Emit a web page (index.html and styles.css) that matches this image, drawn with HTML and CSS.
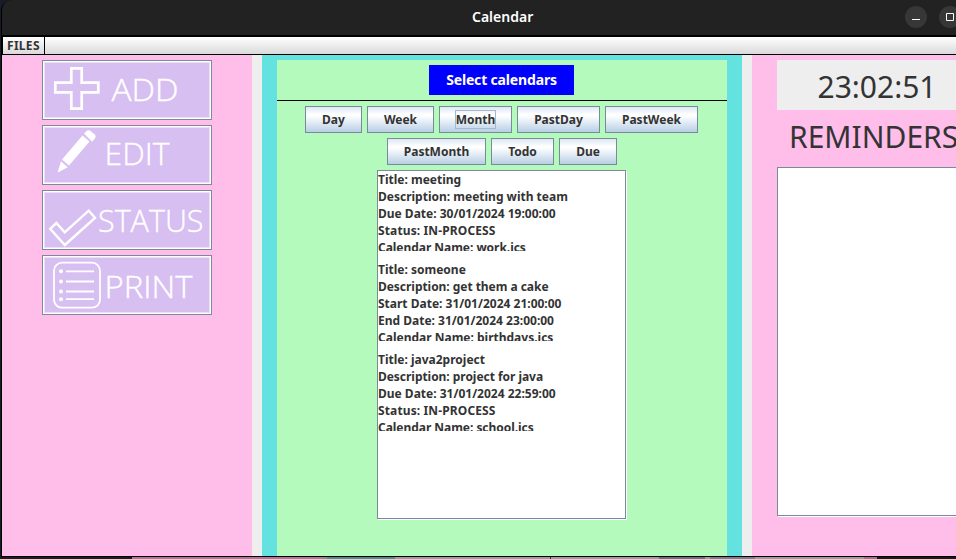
FILE: index.html
```html
<!DOCTYPE html>
<html lang="en">
<head>
<meta charset="utf-8">
<title>Calendar</title>
<link rel="stylesheet" href="styles.css">
</head>
<body>
<div class="window">
  <header class="titlebar">
    <h1 class="title">Calendar</h1>
    <div class="controls">
      <span class="control"><svg width="22" height="22" viewBox="0 0 22 22"><path d="M7 13.5h8" stroke="#fff"/></svg></span>
      <span class="control"><svg width="22" height="22" viewBox="0 0 22 22"><path d="M7.5 7.5h7v7h-7z" stroke="#fff" fill="none"/></svg></span>
    </div>
  </header>
  <nav class="menubar"><span class="menu">FILES</span></nav>
  <main class="content">
    <aside class="actions">
      <button class="action">
        <svg width="166" height="56" viewBox="0 0 166 56"><path d="M27.3 6.3h10.4v14.4h16.6v9.6h-16.6v16.4h-10.4v-16.4h-16v-9.6h16z" fill="none" stroke="#fff" stroke-width="2.7"/><text x="67.5" y="39" textLength="67" lengthAdjust="spacingAndGlyphs">ADD</text></svg>
      </button>
      <button class="action">
        <svg width="166" height="56" viewBox="0 0 166 56"><g fill="#fff"><path d="M38.5 8.5 45.5 14.5 25 38.5 18 32.5z"/><path d="M40 6.5 42.5 4q2-1.5 4 0l4 3.2q2 2 .3 4.3l-2.7 3.2z"/><path d="M17 34.2 23.7 40.2 14.3 45.3 13.8 44.7z"/></g><text x="60.5" y="37.5" textLength="65" lengthAdjust="spacingAndGlyphs">EDIT</text></svg>
      </button>
      <button class="action">
        <svg width="166" height="56" viewBox="0 0 166 56"><path d="M6.2 36.8 12.4 31 20.7 40.4 44.7 18.6 51 25.8 20.8 53z" fill="none" stroke="#fff" stroke-width="2.4"/><text x="54" y="39.5" textLength="105.5" lengthAdjust="spacingAndGlyphs">STATUS</text></svg>
      </button>
      <button class="action">
        <svg width="166" height="56" viewBox="0 0 166 56"><g fill="none" stroke="#fff"><rect x="10" y="5.7" width="46" height="45" rx="8" stroke-width="1.8"/><path d="M22 14.3h28M22 24.5h28M22 34.5h28M22 42.2h28" stroke-width="1.8"/></g><g fill="#fff"><circle cx="17" cy="14.3" r="2"/><circle cx="17" cy="24.5" r="2"/><circle cx="17" cy="34.5" r="2"/><circle cx="17" cy="42.2" r="2"/></g><text x="60.5" y="41" textLength="88" lengthAdjust="spacingAndGlyphs">PRINT</text></svg>
      </button>
    </aside>
    <section class="calendar">
      <div class="panel">
        <div class="picker"><button class="select">Select calendars</button></div>
        <div class="filters">
          <div class="row">
            <button class="filter w57">Day</button><button class="filter w67">Week</button><button class="filter w73"><span class="focus">Month</span></button><button class="filter w83">PastDay</button><button class="filter w93">PastWeek</button>
          </div>
          <div class="row">
            <button class="filter w99">PastMonth</button><button class="filter w63">Todo</button><button class="filter w58">Due</button>
          </div>
        </div>
        <div class="events">
          <div class="event"><p>Title: meeting</p><p>Description: meeting with team</p><p>Due Date: 30/01/2024 19:00:00</p><p class="status">Status: IN-PROCESS</p><p class="tight">Calendar Name: work.ics</p></div>
          <div class="event"><p>Title: someone</p><p class="tight">Description: get them a cake</p><p>Start Date: 31/01/2024 21:00:00</p><p>End Date: 31/01/2024 23:00:00</p><p>Calendar Name: birthdays.ics</p></div>
          <div class="event"><p>Title: java2project</p><p class="tight">Description: project for java</p><p>Due Date: 31/01/2024 22:59:00</p><p class="status">Status: IN-PROCESS</p><p class="tight">Calendar Name: school.ics</p></div>
        </div>
      </div>
    </section>
    <aside class="side">
      <div class="clock">23:02:51</div>
      <h2 class="heading">REMINDERS</h2>
      <div class="reminders"></div>
    </aside>
  </main>
</div>
<div class="desktop"></div>
</body>
</html>
```
FILE: styles.css
```css
* { box-sizing: border-box; margin: 0; padding: 0; }
html, body { width: 956px; height: 559px; overflow: hidden; }
body { background: #181c26; font: bold 12px "Noto Sans", sans-serif; color: #333; }
button { font: inherit; color: inherit; border: 0; display: block; white-space: nowrap; }
.window { height: 557px; margin-left: 1px; border-left: 1px solid #000; border-bottom: 1px solid #000; border-top-left-radius: 11px; overflow: hidden; }
.titlebar { height: 37px; background: #222; border-bottom: 2px solid #000; display: flex; justify-content: space-between; }
.title { font-size: 14px; line-height: 34px; color: #fff; font-weight: 600; padding-left: 470px; }
.controls { display: flex; gap: 12px; padding-top: 6px; width: 51px; flex: none; }
.control { width: 22px; height: 22px; border-radius: 50%; background: #373737; flex: none; }
.control svg { display: block; }
.menubar { height: 18px; border-left: 1px solid #000; border-bottom: 1px solid #000; background: linear-gradient(#fff, #dadada); display: flex; }
.menu { width: 42px; border-right: 1px solid #000; line-height: 17px; padding-left: 4px; letter-spacing: 0.3px; }
.content { height: 501px; display: flex; gap: 10px; background: #eee; }
.actions { width: 250px; flex: none; background: #ffbdea; padding-top: 5px; display: flex; flex-direction: column; align-items: center; gap: 5px; }
.action { width: 170px; height: 60px; border: 1px solid #7a8a99; background: #d8bff1; padding: 1px; box-shadow: inset 0 0 0 1px #fff, inset 0 0 0 2px #ecdff8; }
.action svg { display: block; }
.action text { font: 300 30.8px "Open Sans", "Noto Sans", sans-serif; fill: #fff; stroke: #fff; stroke-width: 0.35px; }
.calendar { width: 480px; flex: none; background: #64e2df; padding: 5px 15px 0; }
.panel { height: 496px; background: #b4fabd; display: flex; flex-direction: column; align-items: flex-start; }
.picker { width: 100%; height: 41px; border-bottom: 1px solid #000; padding-top: 5px; padding-left: 152px; }
.select { width: 145px; height: 30px; background: #00f; color: #fff; font-size: 14px; letter-spacing: -0.16px; line-height: 28px; text-align: center; }
.filters { width: 449px; padding-top: 5px; display: flex; flex-direction: column; gap: 5px; }
.row { display: flex; justify-content: center; gap: 5px; }
.row + .row { margin-left: 1px; }
.filter { height: 27px; border: 1px solid #7a8a99; background: linear-gradient(#dde8f3, #fff 30%, #fff 35%, #b8cfe5); text-align: center; line-height: 25px; }
.focus { display: inline-block; line-height: 17px; height: 19px; border: 1px solid #a3b8cc; }
.w57 { width: 57px; } .w58 { width: 58px; } .w63 { width: 63px; } .w67 { width: 67px; }
.w73 { width: 73px; } .w83 { width: 83px; } .w93 { width: 93px; } .w99 { width: 99px; }
.events { width: 249px; height: 349px; margin: 5px 0 0 100px; background: #fff; border: 1px solid #7a8a99; box-shadow: 1px 1px #fff; display: flex; flex-direction: column; gap: 10px; }
.event { height: 80px; overflow: hidden; white-space: nowrap; }
.event p { line-height: 17px; }
.event .status { letter-spacing: 0.13px; }
.event .tight { letter-spacing: -0.04px; }
.side { flex: 1; background: #ffbdea; padding: 5px 0 0 25px; overflow: hidden; font-weight: 400; }
.clock { width: 200px; height: 50px; background: #eee; font-size: 30px; line-height: 54px; text-align: center; }
.heading { font-size: 30px; font-weight: 400; line-height: 54px; height: 57px; padding-left: 12px; white-space: nowrap; }
.reminders { width: 200px; height: 349px; background: #fff; border: 1px solid #7a8a99; box-shadow: 1px 1px #fff; }
.desktop { height: 2px; background: linear-gradient(90deg, #1b1c1f 132px, #a9789a 132px 319px, #918890 319px 327px, #43928f 327px 395px, #9e9c9c 395px 550px, #333 550px 551px, #9e9c9c 551px 659px, #667080 659px 705px, #9e9c9c 705px 710px, #74808f 710px 755px, #9e9c9c 755px 864px, #a07292 864px 877px, #19191b 877px); }
```
